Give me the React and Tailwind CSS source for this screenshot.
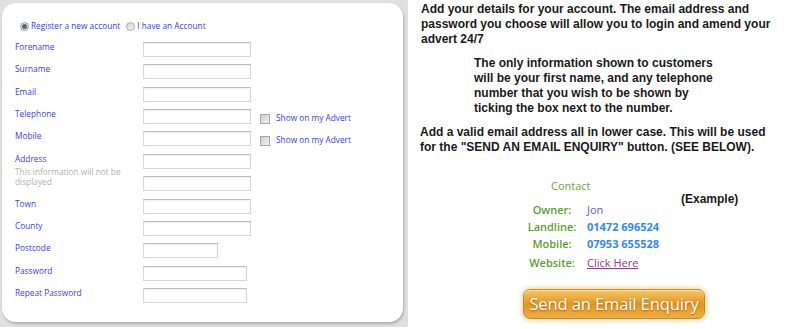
import React from "react";

const formFont = { fontFamily: '"Open Sans", "Liberation Sans", sans-serif' };

function Input({ w = "w-[108px]" }) {
  return (
    <div
      className={`${w} h-[15px] bg-white border border-[#d6d6d6] border-t-[#bdbdbd] shadow-[inset_0_1px_2px_rgba(0,0,0,0.07)]`}
    />
  );
}

function Checkbox() {
  return (
    <div className="w-[10px] h-[10px] border border-[#a8a8a8] bg-gradient-to-br from-[#cfcfcf] to-[#f2f2f2]" />
  );
}

function Row({ label, children, extra }) {
  return (
    <div className="flex h-[15px] items-start">
      <div className="w-[128px] leading-[10px] text-[8.3px] text-[#3a3aff]">{label}</div>
      {children}
      {extra}
    </div>
  );
}

function ShowOnAdvert() {
  return (
    <div className="flex items-center ml-[9px] mt-[5px] h-[10px]">
      <Checkbox />
      <span className="ml-[6px] text-[8.3px] leading-[10px] text-[#3a3aff] -mt-[3px]">Show on my Advert</span>
    </div>
  );
}

export default function App() {
  return (
    <div className="w-[799px] h-[329px] bg-white flex overflow-hidden">
      {/* Left panel */}
      <div className="w-[408px] h-[327px] bg-[#e0e0e0] pt-[3px] pl-[2px] pr-[5px] pb-[5px]">
        <div
          className="w-full h-full bg-white rounded-[14px] shadow-[1px_2px_3px_rgba(0,0,0,0.22)] pt-[17px] pl-[13px]"
          style={formFont}
        >
          {/* Radio row */}
          <div className="flex items-center h-[12px] pl-[5px] text-[8.3px] text-[#3a3aff]">
            <div className="w-[9px] h-[9px] rounded-full border border-[#9a9a9a] bg-[#e8e8e8] flex items-center justify-center">
              <div className="w-[5px] h-[5px] rounded-full bg-[#4a6a80]" />
            </div>
            <span className="ml-[2px]">Register a new account</span>
            <div className="ml-[6px] w-[9px] h-[9px] rounded-full border border-[#a8a8a8] bg-gradient-to-br from-[#d8d8d8] to-[#f4f4f4]" />
            <span className="ml-[2px]">I have an Account</span>
          </div>

          <div className="mt-[10px] flex flex-col gap-[7.36px]">
            <Row label="Forename"><Input /></Row>
            <Row label="Surname"><Input /></Row>
            <Row label="Email"><Input /></Row>
            <Row label="Telephone" extra={<ShowOnAdvert />}><Input /></Row>
            <Row label="Mobile" extra={<ShowOnAdvert />}><Input /></Row>
            <div className="flex h-[15px] items-start">
              <div className="w-[128px]">
                <div className="text-[8.3px] leading-[10px] text-[#3a3aff]">Address</div>
                <div className="mt-[3px] text-[8.3px] leading-[10px] text-[#b0b0b0] w-[112px]">
                  This information will not be displayed
                </div>
              </div>
              <Input />
            </div>
            <Row label=""><Input /></Row>
            <Row label="Town"><Input /></Row>
            <Row label="County"><Input /></Row>
            <Row label="Postcode"><Input w="w-[75px]" /></Row>
            <Row label="Password"><Input w="w-[104px]" /></Row>
            <Row label="Repeat Password"><Input w="w-[104px]" /></Row>
          </div>
        </div>
      </div>

      {/* Right column */}
      <div
        className="flex-1 pl-[13px] pt-[2px] text-[12px] leading-[15px] font-bold text-[#1a1a1a] whitespace-nowrap"
        style={{ fontFamily: '"Liberation Sans", Arial, sans-serif' }}
      >
        <p>
          Add your details for your account. The email address and
          <br />
          password you choose will allow you to login and amend your
          <br />
          advert 24/7
        </p>
        <p className="mt-[9px] pl-[53px]">
          The only information shown to customers
          <br />
          will be your first name, and any telephone
          <br />
          number that you wish to be shown by
          <br />
          ticking the box next to the number.
        </p>
        <p className="mt-[9px] -ml-[1px]">
          Add a valid email address all in lower case. This will be used
          <br />
          for the "SEND AN EMAIL ENQUIRY" button. (SEE BELOW).
        </p>

        <div className="mt-[24px] flex">
          <div
            className="w-[161px] ml-[99px] font-normal"
            style={{ fontFamily: '"Open Sans", "Liberation Sans", sans-serif' }}
          >
            <div className="pl-[31px] text-[11px] leading-[14px] text-[#6aaa3a]">Contact</div>
            <div className="mt-[8px] grid grid-cols-[64px_auto] text-[11px]">
              <div className="h-[17px] leading-[17px] text-center font-semibold text-[#5c9e2e]">Owner:</div>
              <div className="h-[17px] leading-[17px] pl-[3px] text-[#5a5af0]">Jon</div>
              <div className="h-[17px] leading-[17px] text-center font-semibold text-[#5c9e2e]">Landline:</div>
              <div className="h-[17px] leading-[17px] pl-[3px] font-bold text-[#3388ff]">01472 696524</div>
              <div className="h-[17px] leading-[17px] text-center font-semibold text-[#5c9e2e]">Mobile:</div>
              <div className="h-[17px] leading-[17px] pl-[3px] font-bold text-[#3388ff]">07953 655528</div>
              <div className="h-[20px] leading-[17px] pt-[2px] text-center font-semibold text-[#5c9e2e]">Website:</div>
              <div className="h-[20px] leading-[17px] pt-[2px] pl-[3px] text-[#993399] underline">Click Here</div>
            </div>
          </div>
          <div className="mt-[13px] leading-[14px]">(Example)</div>
        </div>

        <div className="ml-[102px] mt-[17px] w-[182px] h-[30px] rounded-[7px] border border-[#c98a1c] bg-gradient-to-b from-[#f7c665] via-[#e2951c] to-[#eeae45] shadow-[0_0_4px_2px_rgba(240,175,70,0.45),inset_0_1px_1px_rgba(255,255,255,0.5)] flex items-center justify-center">
          <span
            className="text-white font-normal text-[16.5px] leading-[20px] tracking-[-0.1px] [text-shadow:0_1px_2px_rgba(120,60,0,0.6)]"
            style={{ fontFamily: '"Open Sans", "Liberation Sans", sans-serif' }}
          >
            Send an Email Enquiry
          </span>
        </div>
      </div>
    </div>
  );
}
